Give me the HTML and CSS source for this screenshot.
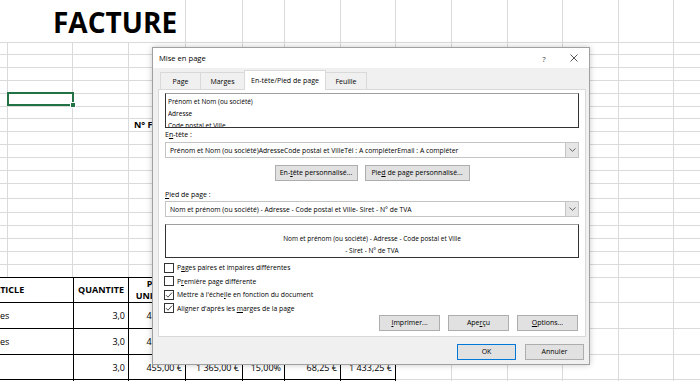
FILE: index.html
```html
<!DOCTYPE html>
<html lang="fr">

<head>
    <meta charset="UTF-8">
    <meta name="viewport" content="width=device-width, initial-scale=1.0">
    <title>Mise en page</title>
    <link rel="stylesheet" href="styles.css">
</head>

<body>
    <!-- worksheet behind the dialog -->
    <div class="sheet">
        <div class="title-band">
            <div class="title">FACTURE</div>
        </div>

        <div class="upper">
            <div class="cell-sel"></div>
            <div class="cell-nfa">N° FACTURE</div>
        </div>

        <div class="lower">
            <div class="fill"></div>

            <div class="tc th th-article">ARTICLE</div>
            <div class="tc th">QUANTITE</div>
            <div class="tc th">PRIX<br>UNITAIRE</div>
            <div class="tc th"></div>
            <div class="tc th"></div>
            <div class="tc th"></div>
            <div class="tc th"></div>

            <div class="tc left">es</div>
            <div class="tc">3,0</div>
            <div class="tc">455,00 €</div>
            <div class="tc">1 365,00 €</div>
            <div class="tc">15,00%</div>
            <div class="tc">68,25 €</div>
            <div class="tc">1 433,25 €</div>

            <div class="tc left">es</div>
            <div class="tc">3,0</div>
            <div class="tc">455,00 €</div>
            <div class="tc">1 365,00 €</div>
            <div class="tc">15,00%</div>
            <div class="tc">68,25 €</div>
            <div class="tc">1 433,25 €</div>

            <div class="tc left"></div>
            <div class="tc">3,0</div>
            <div class="tc">455,00 €</div>
            <div class="tc">1 365,00 €</div>
            <div class="tc">15,00%</div>
            <div class="tc">68,25 €</div>
            <div class="tc">1 433,25 €</div>

            <div class="tc"></div>
            <div class="tc"></div>
            <div class="tc"></div>
            <div class="tc"></div>
            <div class="tc"></div>
            <div class="tc"></div>
            <div class="tc"></div>
        </div>
    </div>

    <!-- page setup dialog -->
    <div class="dialog">
        <div class="dlg-title">
            <span class="dlg-caption">Mise en page</span>
            <span class="tb-btn help">?</span>
            <span class="tb-btn">
                <svg width="8" height="8" viewBox="0 0 8 8">
                    <path d="M0.5 0.5 L7.5 7.5 M7.5 0.5 L0.5 7.5" stroke="#444" stroke-width="0.9" fill="none" />
                </svg>
            </span>
        </div>

        <div class="dlg-body">
            <div class="tabs">
                <div class="tab tab-page">Page</div>
                <div class="tab tab-marges">Marges</div>
                <div class="tab tab-entete active">En-tête/Pied de page</div>
                <div class="tab tab-feuille">Feuille</div>
            </div>

            <div class="panel">
                <div class="preview preview-head">
                    <div>Prénom et Nom (ou société)</div>
                    <div>Adresse</div>
                    <div>Code postal et Ville</div>
                </div>

                <div class="field-label">E<u>n</u>-tête :</div>
                <div class="combo">
                    <span class="combo-text">Prénom et Nom (ou société)AdresseCode postal et VilleTél : A compléterEmail : A compléter</span>
                    <span class="combo-arrow">
                        <svg width="7" height="4" viewBox="0 0 7 4">
                            <path d="M0.5 0.5 L3.5 3.3 L6.5 0.5" stroke="#555" stroke-width="0.9" fill="none" />
                        </svg>
                    </span>
                </div>

                <div class="btn-row center">
                    <button type="button" class="btn btn-head">En-<u>t</u>ête personnalisé...</button>
                    <button type="button" class="btn btn-foot">Pie<u>d</u> de page personnalisé...</button>
                </div>

                <div class="field-label label-foot"><u>P</u>ied de page :</div>
                <div class="combo combo-foot">
                    <span class="combo-text">Nom et prénom (ou société) - Adresse - Code postal et Ville- Siret - N° de TVA</span>
                    <span class="combo-arrow">
                        <svg width="7" height="4" viewBox="0 0 7 4">
                            <path d="M0.5 0.5 L3.5 3.3 L6.5 0.5" stroke="#555" stroke-width="0.9" fill="none" />
                        </svg>
                    </span>
                </div>

                <div class="preview preview-foot">
                    <div>Nom et prénom (ou société) - Adresse - Code postal et Ville</div>
                    <div>- Siret - N° de TVA</div>
                </div>

                <div class="checks">
                    <div class="check">
                        <span class="box"></span>
                        <span>P<u>a</u>ges paires et impaires différentes</span>
                    </div>
                    <div class="check">
                        <span class="box"></span>
                        <span>P<u>r</u>emière page différente</span>
                    </div>
                    <div class="check">
                        <span class="box">
                            <svg width="8" height="8" viewBox="0 0 8 8">
                                <path d="M1 4.2 L3 6.2 L7 1.6" stroke="#333" stroke-width="0.9" fill="none" />
                            </svg>
                        </span>
                        <span>Mettre à l'éche<u>l</u>le en fonction du document</span>
                    </div>
                    <div class="check">
                        <span class="box">
                            <svg width="8" height="8" viewBox="0 0 8 8">
                                <path d="M1 4.2 L3 6.2 L7 1.6" stroke="#333" stroke-width="0.9" fill="none" />
                            </svg>
                        </span>
                        <span>Aligner d'après les <u>m</u>arges de la page</span>
                    </div>
                </div>

                <div class="btn-row end">
                    <button type="button" class="btn btn-side"><u>I</u>mprimer...</button>
                    <button type="button" class="btn btn-side">Ape<u>r</u>çu</button>
                    <button type="button" class="btn btn-side"><u>O</u>ptions...</button>
                </div>
            </div>

            <div class="dlg-foot">
                <button type="button" class="btn btn-dlg default">OK</button>
                <button type="button" class="btn btn-dlg">Annuler</button>
            </div>
        </div>
    </div>
</body>

</html>
```

FILE: styles.css
```css
:root {
    --grid: #dadada;
    --vlines: linear-gradient(90deg,
            transparent 7px, var(--grid) 7px 8px,
            transparent 8px 72px, var(--grid) 72px 73px,
            transparent 73px 128px, var(--grid) 128px 129px,
            transparent 129px 185px, var(--grid) 185px 186px,
            transparent 186px 242px, var(--grid) 242px 243px,
            transparent 243px 284px, var(--grid) 284px 285px,
            transparent 285px 340px, var(--grid) 340px 341px,
            transparent 341px 395px, var(--grid) 395px 396px,
            transparent 396px 451px, var(--grid) 451px 452px,
            transparent 452px 507px, var(--grid) 507px 508px,
            transparent 508px 562px, var(--grid) 562px 563px,
            transparent 563px 618px, var(--grid) 618px 619px,
            transparent 619px 673px, var(--grid) 673px 674px,
            transparent 674px);
}

* {
    box-sizing: border-box;
}

html,
body {
    margin: 0;
}

body {
    position: relative;
    width: 700px;
    height: 381px;
    overflow: hidden;
    background: #fff;
    color: #000;
    font-family: "Open Sans", "Liberation Sans", sans-serif;
}

/* ---------- worksheet ---------- */

.sheet {
    height: 381px;
    overflow: hidden;
    font-size: 9px;
}

.title-band {
    height: 43px;
    border-bottom: 1px solid var(--grid);
    background-image: var(--vlines);
}

.title {
    width: 185px;
    height: 42px;
    padding: 8px 0 0 53px;
    background: #fff;
    font-size: 28px;
    font-weight: 700;
    line-height: 28px;
}

.upper {
    display: grid;
    grid-template-columns: 7px 66px 55px 57px 1fr;
    grid-template-rows: 11px 13px 13px 13px 13px 12px 13px 13px 13px 13px 13px 15px 14px 13px 13px 13px 13px 13px;
    height: 234px;
    background-image:
        var(--vlines),
        linear-gradient(180deg,
            transparent 11px, var(--grid) 11px 12px,
            transparent 12px 24px, var(--grid) 24px 25px,
            transparent 25px 37px, var(--grid) 37px 38px,
            transparent 38px 50px, var(--grid) 50px 51px,
            transparent 51px 63px, var(--grid) 63px 64px,
            transparent 64px 75px, var(--grid) 75px 76px,
            transparent 76px 88px, var(--grid) 88px 89px,
            transparent 89px 101px, var(--grid) 101px 102px,
            transparent 102px 114px, var(--grid) 114px 115px,
            transparent 115px 127px, var(--grid) 127px 128px,
            transparent 128px 140px, var(--grid) 140px 141px,
            transparent 141px 155px, var(--grid) 155px 156px,
            transparent 156px 169px, var(--grid) 169px 170px,
            transparent 170px 182px, var(--grid) 182px 183px,
            transparent 183px 195px, var(--grid) 195px 196px,
            transparent 196px 208px, var(--grid) 208px 209px,
            transparent 209px 221px, var(--grid) 221px 222px,
            transparent 222px);
}

.cell-sel {
    position: relative;
    grid-row: 5;
    grid-column: 2;
    margin: -1px -1px 0 0;
    border: 2px solid #217346;
}

.cell-sel::after {
    content: "";
    position: absolute;
    right: -4px;
    bottom: -4px;
    width: 4px;
    height: 4px;
    background: #217346;
    border: 1px solid #fff;
}

.cell-nfa {
    grid-row: 7;
    grid-column: 4;
    display: flex;
    align-items: center;
    padding-left: 6px;
    font-weight: 700;
    white-space: nowrap;
}

.lower {
    display: grid;
    grid-template-columns: 74px 55px 57px 57px 42px 56px 55px 1fr;
    grid-template-rows: 26px 26px 26px 25px 26px;
}

.fill {
    grid-column: 8;
    grid-row: 1 / -1;
    background-image:
        linear-gradient(90deg,
            transparent 55px, var(--grid) 55px 56px,
            transparent 56px 111px, var(--grid) 111px 112px,
            transparent 112px 166px, var(--grid) 166px 167px,
            transparent 167px 222px, var(--grid) 222px 223px,
            transparent 223px 277px, var(--grid) 277px 278px,
            transparent 278px),
        linear-gradient(180deg,
            var(--grid) 0 1px,
            transparent 1px 25px, var(--grid) 25px 26px,
            transparent 26px 51px, var(--grid) 51px 52px,
            transparent 52px 77px, var(--grid) 77px 78px,
            transparent 78px 102px, var(--grid) 102px 103px,
            transparent 103px);
}

.tc {
    display: flex;
    align-items: center;
    justify-content: flex-end;
    padding-right: 3px;
    border-right: 1px solid #000;
    border-bottom: 1px solid #000;
    white-space: nowrap;
}

.tc.left {
    justify-content: flex-start;
    padding: 0;
}

.th {
    justify-content: center;
    padding: 0;
    border-top: 1px solid #000;
    font-weight: 700;
    text-align: center;
    line-height: 12px;
}

.th-article {
    justify-content: flex-start;
    text-indent: -12px;
}

/* ---------- dialog ---------- */

.dialog {
    position: absolute;
    left: 152px;
    top: 47px;
    width: 438px;
    height: 318px;
    display: flex;
    flex-direction: column;
    border: 1px solid #a0a0a0;
    background: #f0f0f0;
    box-shadow: 0 0 6px rgba(0, 0, 0, 0.22);
    font-size: 7px;
}

.dlg-title {
    display: flex;
    align-items: center;
    height: 20px;
    padding-left: 6px;
    background: #fff;
}

.dlg-caption {
    flex: 1;
    font-size: 7.6px;
}

.tb-btn {
    display: flex;
    align-items: center;
    justify-content: center;
    width: 30px;
    height: 100%;
    color: #444;
}

.tb-btn.help {
    font-size: 8px;
}

.dlg-body {
    display: flex;
    flex-direction: column;
    flex: 1;
}

.tabs {
    position: relative;
    z-index: 1;
    display: flex;
    align-items: flex-end;
    height: 21px;
    padding-left: 7px;
}

.tab {
    display: flex;
    align-items: center;
    justify-content: center;
    height: 17px;
    margin-right: -1px;
    border: 1px solid #d9d9d9;
    border-bottom: none;
    background: #f0f0f0;
}

.tab.active {
    height: 20px;
    margin-bottom: -1px;
    background: #fff;
    padding-bottom: 1px;
}

.tab-page {
    width: 41px;
}

.tab-marges {
    width: 45px;
}

.tab-entete {
    width: 82px;
}

.tab-feuille {
    width: 42px;
}

.panel {
    display: flex;
    flex-direction: column;
    height: 248px;
    margin: 0 3px 0 5px;
    padding: 3px 6px 0 6px;
    border: 1px solid #d9d9d9;
    background: #fff;
}

.preview {
    border: 1px solid #333;
    border-top-color: #a0a0a0;
    font-size: 6.5px;
    overflow: hidden;
    white-space: nowrap;
}

.preview-head {
    height: 35px;
    padding: 2px 2px 0;
    line-height: 12px;
}

.preview-foot {
    height: 34px;
    margin-top: 7px;
    padding-top: 8px;
    line-height: 12px;
    text-align: center;
}

.field-label {
    height: 10px;
    margin-top: 2px;
    line-height: 10px;
}

.label-foot {
    margin-top: 9px;
}

.combo {
    display: flex;
    align-items: center;
    height: 16px;
    margin-top: 2px;
    border: 1px solid #c4c4c4;
    background: #fff;
}

.combo-foot {
    margin-top: 1px;
}

.combo-text {
    flex: 1;
    padding-left: 4px;
    font-size: 6.8px;
    white-space: nowrap;
    overflow: hidden;
}

.combo-arrow {
    display: flex;
    align-items: center;
    justify-content: center;
    width: 13px;
    height: 100%;
    border-left: 1px solid #c4c4c4;
    background: #e6e6e6;
}

.btn-row {
    display: flex;
    gap: 7px;
    margin-top: 7px;
}

.btn-row.center {
    justify-content: center;
}

.btn-row.end {
    justify-content: flex-end;
    gap: 8px;
    margin: 0 1px 0 0;
}

.btn {
    display: block;
    height: 16px;
    padding: 0;
    border: 1px solid #adadad;
    background: #e1e1e1;
    color: #000;
    font: inherit;
    line-height: 14px;
    text-align: center;
    white-space: nowrap;
}

.btn-head {
    width: 83px;
}

.btn-foot {
    width: 105px;
}

.btn-side {
    width: 61px;
}

.btn-dlg {
    width: 59px;
}

.btn.default {
    border-color: #0078d7;
}

.checks {
    margin-top: 3px;
    font-size: 6.8px;
}

.check {
    display: flex;
    align-items: center;
    height: 13.5px;
    margin-left: -1px;
}

.box {
    display: flex;
    align-items: center;
    justify-content: center;
    width: 10px;
    height: 10px;
    margin-right: 3px;
    border: 1px solid #333;
    background: #fff;
}

.dlg-foot {
    display: flex;
    justify-content: flex-end;
    gap: 9px;
    flex: 1;
    padding: 7px 5px 0 0;
}
```
